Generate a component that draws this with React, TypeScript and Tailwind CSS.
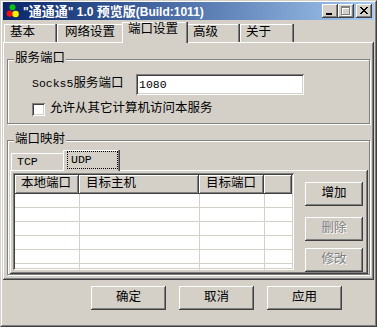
import React from 'react';

// classic 3D edges
const raised =
  'shadow-[inset_-1px_-1px_0_#404040,inset_1px_1px_0_#ffffff,inset_-2px_-2px_0_#808080,inset_2px_2px_0_#d4d0c8]';
const sunken =
  'shadow-[inset_1px_1px_0_#808080,inset_-1px_-1px_0_#ffffff,inset_2px_2px_0_#404040,inset_-2px_-2px_0_#d4d0c8]';
const tabEdge = 'shadow-[inset_-1px_0_0_#404040,inset_-2px_0_0_#808080,inset_1px_1px_0_#ffffff]';
const etched = 'border border-[#808080] shadow-[inset_1px_1px_0_#ffffff,1px_1px_0_#ffffff]';

const tabs = [
  { label: '基本', cls: 'w-[53px] pl-[6px]' },
  { label: '网络设置', cls: 'w-[67px] pl-[8px]' },
  { label: '端口设置', cls: 'w-[66px] pl-[6px]', active: true },
  { label: '高级', cls: 'w-[54px] pl-[7px]' },
  { label: '关于', cls: 'w-[54px] pl-[6px]' },
];

const closeRows = ['##....##', '.##..##.', '..####..', '...##...', '..####..', '.##..##.', '##....##'];

function CapBtn({ children, className = '' }: { children: React.ReactNode; className?: string }) {
  return (
    <div className={`${raised} h-[14px] w-[16px] bg-[#d4d0c8] ${className}`}>
      <svg width="16" height="14" className="block" shapeRendering="crispEdges">
        {children}
      </svg>
    </div>
  );
}

function Btn({ label, className = '', disabled = false }: { label: string; className?: string; disabled?: boolean }) {
  return (
    <div
      className={`${raised} flex h-[24px] items-center justify-center bg-[#d4d0c8] leading-[13px] ${className} ${
        disabled ? 'text-[#808080] [text-shadow:1px_1px_0_#ffffff]' : 'text-black'
      }`}
    >
      {label}
    </div>
  );
}

function Group({ label, className = '', children }: { label: string; className?: string; children: React.ReactNode }) {
  return (
    <div className={`relative w-[363px] ${etched} ${className}`}>
      <span className="absolute left-[6px] top-[-7px] bg-[#d4d0c8] px-[1px] leading-[13px]">{label}</span>
      {children}
    </div>
  );
}

export default function App() {
  return (
    <div className="h-[327px] w-[377px] bg-[#d4d0c8] font-['Liberation_Mono','Noto_Sans_CJK_SC',monospace] text-[12.5px] text-black">
      <div className="h-full w-full border border-t-[#d4d0c8] border-l-[#d4d0c8] border-r-[#404040] border-b-[#404040]">
        <div className="flex h-full w-full flex-col border border-t-white border-l-white border-r-[#808080] border-b-[#808080] px-[1px] pb-[1px]">
          {/* title bar */}
          <div className="flex h-[18px] shrink-0 items-center bg-linear-to-r from-[#0a246a] to-[#a6caf0] pl-[2px] pr-[2px]">
            <svg width="14" height="14" viewBox="0 0 14 14" className="shrink-0">
              <circle cx="7.5" cy="3.2" r="3" fill="#10c010" />
              <circle cx="4.8" cy="9.6" r="3.2" fill="#f01010" />
              <circle cx="10.6" cy="10" r="3.2" fill="#f8f000" />
            </svg>
            <span className="ml-[4px] whitespace-nowrap font-['Liberation_Sans','Noto_Sans_CJK_SC',sans-serif] text-[12px] font-bold leading-none text-white">
              "<span className="text-[13px]">通通通</span>" 1.0 <span className="text-[13px]">预览版</span>(Build:1011)
            </span>
            <div className="ml-auto flex items-center">
              <CapBtn>
                <rect x="4" y="9" width="6" height="2" fill="#000" />
              </CapBtn>
              <CapBtn>
                <g fill="none" stroke="#ffffff">
                  <rect x="4.5" y="3.5" width="8" height="8" />
                  <line x1="4" y1="4.5" x2="13" y2="4.5" />
                </g>
                <g fill="none" stroke="#808080">
                  <rect x="3.5" y="2.5" width="8" height="8" />
                  <line x1="3" y1="3.5" x2="12" y2="3.5" />
                </g>
              </CapBtn>
              <CapBtn className="ml-[2px]">
                {closeRows.map((row, y) =>
                  row.split('').map((c, x) =>
                    c === '#' ? <rect key={`${x}-${y}`} x={4 + x} y={3 + y} width="1" height="1" fill="#000" /> : null,
                  ),
                )}
              </CapBtn>
            </div>
          </div>

          {/* tab strip */}
          <div className="flex h-[22px] shrink-0 items-end pl-[1px]">
            {tabs.map((t) => (
              <div
                key={t.label}
                className={`${tabEdge} ${t.cls} shrink-0 bg-[#d4d0c8] leading-[13px] ${
                  t.active ? 'relative z-10 -mx-[2px] mb-[-1px] h-[21px] pt-[2px]' : 'h-[18px] pt-[3px]'
                }`}
              >
                {t.label}
              </div>
            ))}
          </div>

          {/* tab panel */}
          <div className={`${raised} flex h-[238px] shrink-0 flex-col bg-[#d4d0c8] pl-[4px] pt-[17px]`}>
            <Group label="服务端口" className="h-[65px]">
              <div className="flex flex-col pl-[24px] pt-[14px]">
                <div className="flex h-[21px] items-center">
                  <span className="w-[104px] whitespace-nowrap">
                    <span className="text-[11.5px]">Socks5</span>服务端口
                  </span>
                  <div className={`${sunken} flex h-[21px] w-[168px] items-center bg-white pl-[3px]`}>
                    <span className="text-[11.5px]">1080</span>
                  </div>
                </div>
                <div className="mt-[8px] flex h-[13px] items-center">
                  <div className={`${sunken} h-[13px] w-[13px] bg-white`} />
                  <span className="ml-[5px] leading-[13px]">允许从其它计算机访问本服务</span>
                </div>
              </div>
            </Group>

            <Group label="端口映射" className="mt-[16px] h-[135px]">
              <div className="flex flex-col pt-[9px]">
                <div className="flex h-[20px] items-end pl-[3px]">
                  <div className={`${tabEdge} flex h-[17px] w-[54px] items-center bg-[#d4d0c8] pl-[6px] text-[11.5px]`}>
                    TCP
                  </div>
                  <div className={`${tabEdge} relative z-10 -mx-[2px] mb-[-1px] h-[21px] w-[57px] bg-[#d4d0c8] pl-[4px] pt-[1px]`}>
                    <div className="flex h-[18px] w-[51px] items-center border border-dotted border-black pl-[3px] text-[11.5px]">
                      UDP
                    </div>
                  </div>
                </div>

                <div className={`${raised} ml-[2px] flex h-[104px] w-[358px] items-start bg-[#d4d0c8]`}>
                  {/* list view */}
                  <div className={`${sunken} ml-[3px] mt-[3px] h-[97px] w-[281px] overflow-hidden bg-white p-[2px]`}>
                    <div className="flex h-[19px]">
                      <div className={`${raised} flex w-[64px] items-center bg-[#d4d0c8] pl-[6px]`}>本地端口</div>
                      <div className={`${raised} flex w-[120px] items-center bg-[#d4d0c8] pl-[7px]`}>目标主机</div>
                      <div className={`${raised} flex w-[65px] items-center bg-[#d4d0c8] pl-[7px]`}>目标端口</div>
                      <div className={`${raised} flex-1 bg-[#d4d0c8]`} />
                    </div>
                    {[0, 1, 2, 3, 4, 5].map((r) => (
                      <div key={r} className="flex h-[14px] border-b border-[#d4d0c8]">
                        <div className="w-[65px] border-r border-[#d4d0c8]" />
                        <div className="w-[120px] border-r border-[#d4d0c8]" />
                        <div className="w-[65px] border-r border-[#d4d0c8]" />
                        <div className="flex-1" />
                      </div>
                    ))}
                  </div>

                  <div className="ml-[11px] mt-[12px] flex flex-col">
                    <Btn label="增加" className="w-[58px]" />
                    <Btn label="删除" className="mt-[11px] w-[58px]" disabled />
                    <Btn label="修改" className="mt-[7px] w-[58px]" disabled />
                  </div>
                </div>
              </div>
            </Group>
          </div>

          {/* dialog buttons */}
          <div className="mt-[6px] flex gap-[13px] pl-[88px]">
            <Btn label="确定" className="w-[75px]" />
            <Btn label="取消" className="w-[75px]" />
            <Btn label="应用" className="w-[75px]" />
          </div>
        </div>
      </div>
    </div>
  );
}
